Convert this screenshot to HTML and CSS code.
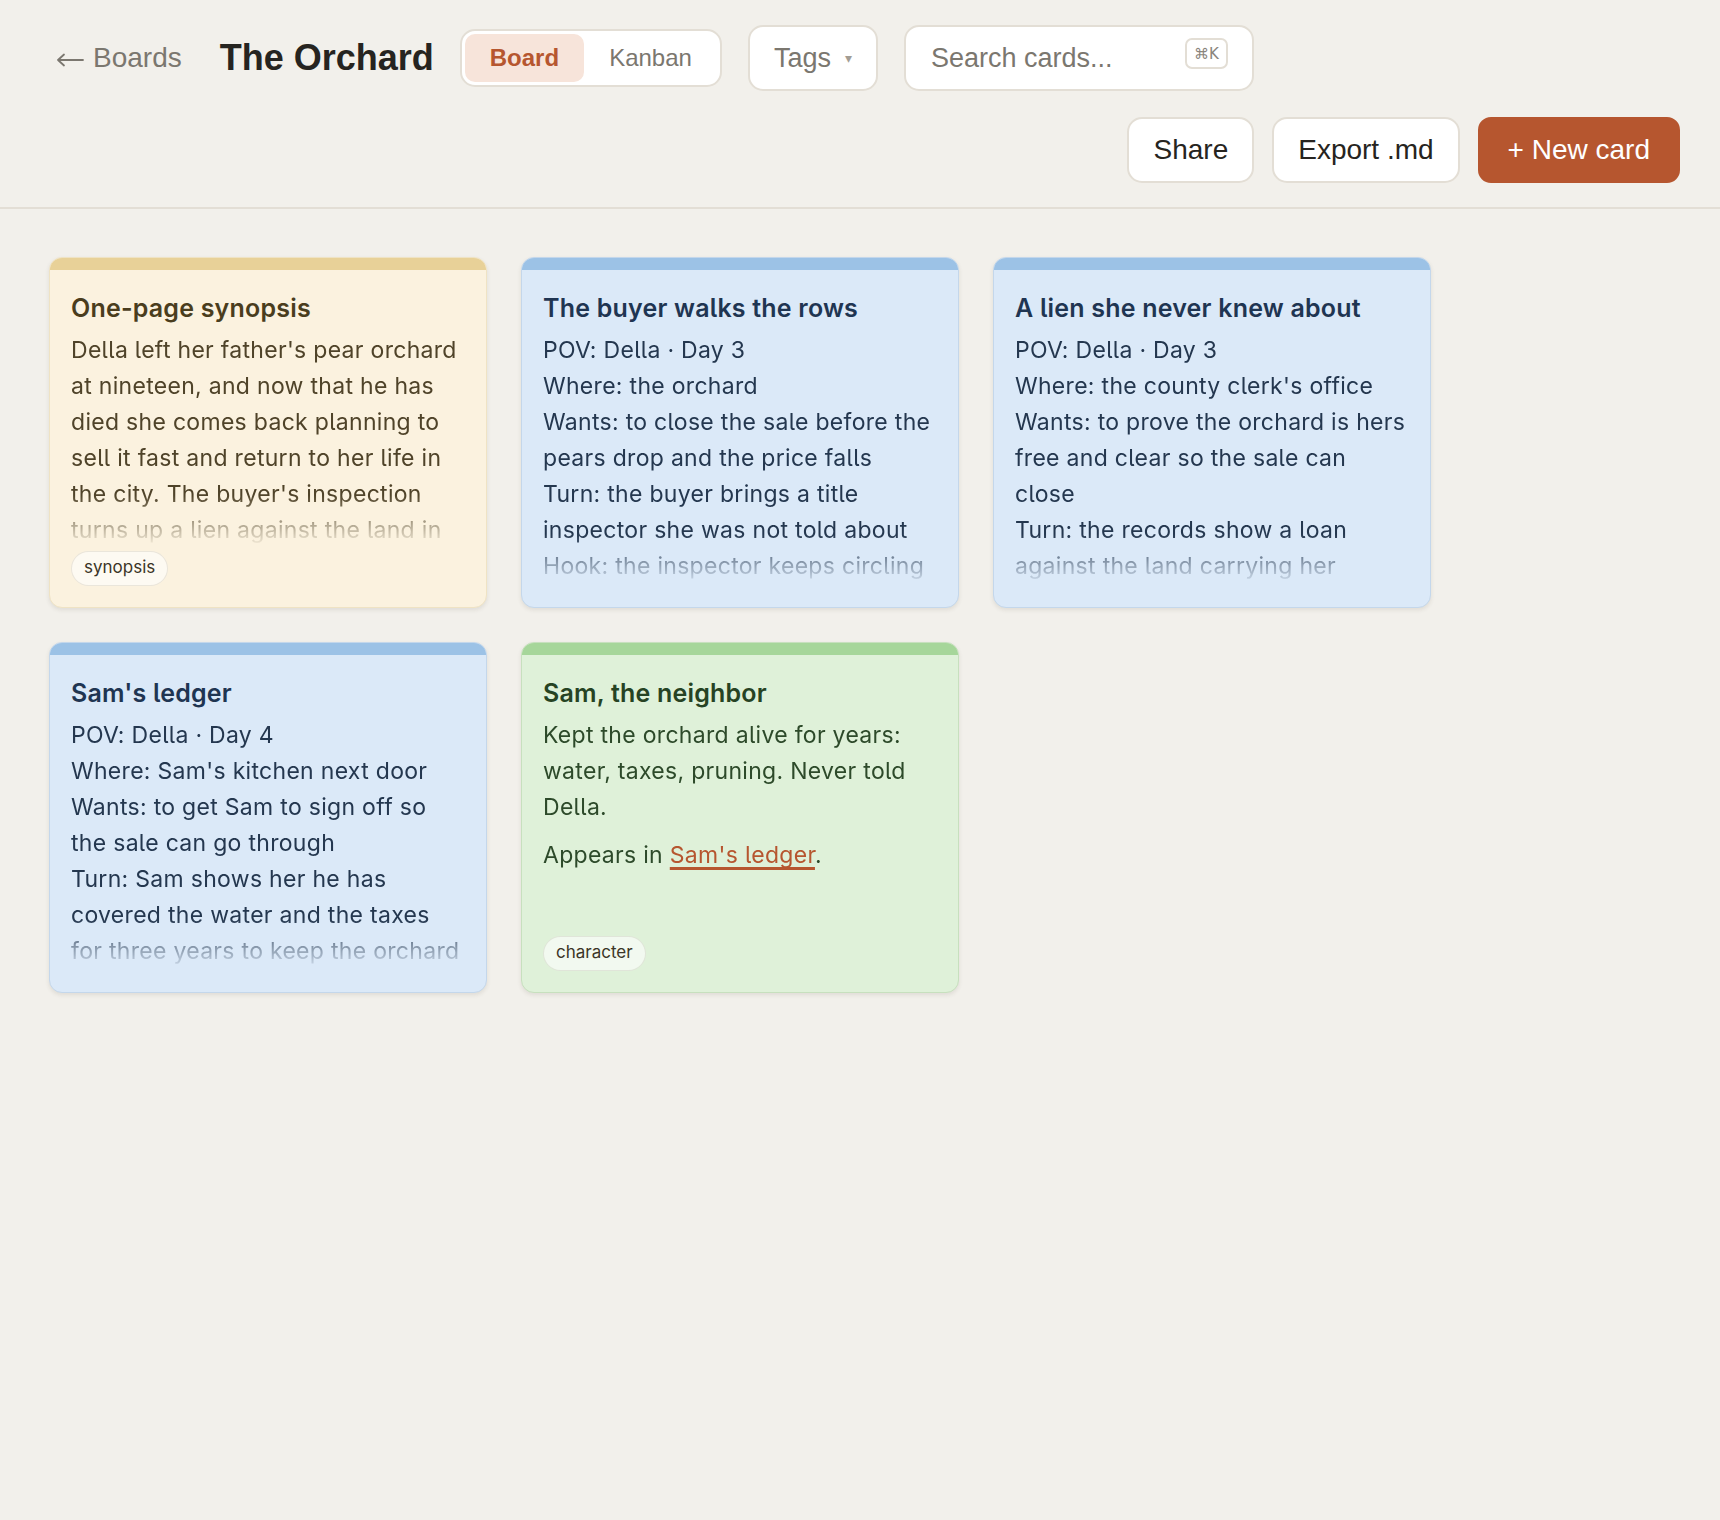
FILE: index.html
```html
<!DOCTYPE html>
<html lang="en">
<head>
  <meta charset="UTF-8">
  <meta name="viewport" content="width=device-width, initial-scale=1.0">
  <title>The Orchard</title>
  <link rel="stylesheet" href="styles.css">
</head>
<body>
  <header class="topbar">
    <a class="back-link" href="#">
      <svg class="back-arrow" width="28" height="14" viewBox="0 0 28 14" fill="none" stroke="currentColor" stroke-width="1.8" stroke-linecap="round" stroke-linejoin="round"><path d="M27 7H2M8 1.5L2 7l6 5.5"/></svg>
      Boards
    </a>
    <h1 class="board-title">The Orchard</h1>
    <div class="view-switch">
      <button class="view-btn active">Board</button>
      <button class="view-btn">Kanban</button>
    </div>
    <button class="tags-btn">Tags <span class="caret">▾</span></button>
    <label class="search">
      <input type="text" placeholder="Search cards...">
      <kbd>⌘K</kbd>
    </label>
    <div class="actions">
      <button class="btn">Share</button>
      <button class="btn">Export .md</button>
      <button class="btn btn-primary">+ New card</button>
    </div>
  </header>

  <main class="board">
    <!-- synopsis -->
    <article class="card card-yellow">
      <div class="card-bar"></div>
      <div class="card-inner">
        <h2 class="card-title">One-page synopsis</h2>
        <div class="card-body">
          <p>Della left her father's pear orchard at nineteen, and now that he has died she comes back planning to sell it fast and return to her life in the city. The buyer's inspection turns up a lien against the land in her father's name, and the only person who knows why is the neighbor.</p>
        </div>
        <div class="card-tags"><span class="tag">synopsis</span></div>
      </div>
    </article>

    <!-- scenes -->
    <article class="card card-blue">
      <div class="card-bar"></div>
      <div class="card-inner">
        <h2 class="card-title">The buyer walks the rows</h2>
        <div class="card-body">
          <p>POV: Della · Day 3</p>
          <p>Where: the orchard</p>
          <p>Wants: to close the sale before the pears drop and the price falls</p>
          <p>Turn: the buyer brings a title inspector she was not told about</p>
          <p>Hook: the inspector keeps circling back to the north boundary</p>
        </div>
      </div>
    </article>

    <article class="card card-blue">
      <div class="card-bar"></div>
      <div class="card-inner">
        <h2 class="card-title">A lien she never knew about</h2>
        <div class="card-body">
          <p>POV: Della · Day 3</p>
          <p>Where: the county clerk's office</p>
          <p>Wants: to prove the orchard is hers free and clear so the sale can close</p>
          <p>Turn: the records show a loan against the land carrying her father's signature</p>
        </div>
      </div>
    </article>

    <article class="card card-blue">
      <div class="card-bar"></div>
      <div class="card-inner">
        <h2 class="card-title">Sam's ledger</h2>
        <div class="card-body">
          <p>POV: Della · Day 4</p>
          <p>Where: Sam's kitchen next door</p>
          <p>Wants: to get Sam to sign off so the sale can go through</p>
          <p>Turn: Sam shows her he has covered the water and the taxes for three years to keep the orchard alive</p>
        </div>
      </div>
    </article>

    <!-- characters -->
    <article class="card card-green">
      <div class="card-bar"></div>
      <div class="card-inner">
        <h2 class="card-title">Sam, the neighbor</h2>
        <div class="card-body">
          <p>Kept the orchard alive for years: water, taxes, pruning. Never told Della.</p>
          <p class="para">Appears in <a href="#" class="card-link">Sam's ledger</a>.</p>
        </div>
        <div class="card-tags"><span class="tag">character</span></div>
      </div>
    </article>
  </main>
</body>
</html>
```

FILE: styles.css
```css
* { box-sizing: border-box; }
body { margin: 0; background: #f2f0eb; font-family: "Liberation Sans", Arial, sans-serif; color: #262420; min-height: 100vh; }
button { font-family: inherit; cursor: pointer; }

/* top bar */
.topbar { display: flex; flex-wrap: wrap; align-items: center; gap: 26px; padding: 25px 40px 24px 56px; border-bottom: 2px solid #e3ded5; }
.back-link { display: flex; align-items: center; gap: 9px; font-size: 28px; color: #7b776f; text-decoration: none; margin-right: 12px; }
.back-arrow { margin-top: 3px; }
.board-title { margin: 0; font-size: 36px; font-weight: 700; color: #262420; }
.view-switch { display: flex; padding: 3px; background: #fff; border: 2px solid #e3ded5; border-radius: 15px; }
.view-btn { height: 48px; padding: 0 25px; border: none; border-radius: 10px; background: transparent; font-size: 24px; color: #7b776f; }
.view-btn.active { background: #f7e4da; color: #b6562f; font-weight: 700; }
.tags-btn { height: 66px; padding: 0 24px; background: #fff; border: 2px solid #e3ded5; border-radius: 15px; font-size: 27px; color: #7b776f; display: flex; align-items: center; gap: 14px; }
.caret { font-size: 14px; color: #a29d94; }
.search { display: flex; width: 350px; height: 66px; padding: 0 24px 0 25px; background: #fff; border: 2px solid #e3ded5; border-radius: 15px; }
.search input { flex: 1; min-width: 0; border: none; outline: none; background: transparent; font-family: inherit; font-size: 27px; color: #262420; padding: 0; }
.search input::placeholder { color: #7b776f; }
.search kbd { align-self: flex-start; margin-top: 11px; width: 43px; height: 31px; display: flex; align-items: center; justify-content: center; border: 2px solid #e3ded5; border-radius: 7px; font-family: "DejaVu Sans", "Liberation Sans", sans-serif; font-size: 15px; color: #8a857c; }
.actions { display: flex; gap: 18px; margin-left: auto; }
.btn { height: 66px; padding: 0 24px; background: #fff; border: 2px solid #e3ded5; border-radius: 15px; font-size: 28px; color: #262420; }
.btn-primary { background: #b6562f; border-color: #b6562f; color: #fff; padding: 0 28px; border-radius: 13px; }

/* board */
.board { display: grid; grid-template-columns: repeat(auto-fill, 438px); gap: 34px; padding: 48px 40px 48px 49px; }
.card { height: 351px; display: flex; flex-direction: column; border: 1.5px solid; border-radius: 13px; overflow: hidden; box-shadow: 0 2px 4px rgba(60, 50, 30, 0.1); font-family: Inter, "Noto Sans", sans-serif; font-feature-settings: "cv05" 1; }
.card-bar { height: 12px; flex: none; }
.card-inner { flex: 1; min-height: 0; display: flex; flex-direction: column; padding: 22px 21px 21px; }
.card-title { margin: 0 0 8px; font-size: 25px; line-height: 32px; font-weight: 600; letter-spacing: 0.2px; }
.card-body { flex: 1 1 auto; min-height: 0; overflow: hidden; font-size: 23px; line-height: 36px; letter-spacing: 0.3px; -webkit-mask-image: linear-gradient(to bottom, #000 calc(100% - 52px), transparent 100%); mask-image: linear-gradient(to bottom, #000 calc(100% - 52px), transparent 100%); }
.card-body p { margin: 0; }
.card-body .para { margin-top: 12px; }
.card-link { color: #b6562f; text-decoration: underline; text-decoration-thickness: 3px; text-underline-offset: 4px; text-decoration-skip-ink: none; }
.card-tags { flex: none; display: flex; gap: 8px; margin-top: 4px; }
.tag { display: inline-block; height: 35px; line-height: 31px; padding: 0 12px; border: 1.5px solid rgba(90, 80, 50, 0.12); border-radius: 18px; background: rgba(255, 255, 255, 0.6); font-size: 17px; color: #3b3527; }

.card-yellow { background: #fbf2df; border-color: #efe3c4; }
.card-yellow .card-bar { background: #e8d198; }
.card-yellow .card-title { color: #4a3d1d; }
.card-yellow .card-body { color: #4f4329; }

.card-blue { background: #dbe9f8; border-color: #c4d7eb; }
.card-blue .card-bar { background: #9cc2e6; }
.card-blue .card-title { color: #1f3552; }
.card-blue .card-body { color: #24374f; }

.card-green { background: #dff1d9; border-color: #c7e0be; }
.card-green .card-bar { background: #a6d69a; }
.card-green .card-title { color: #264323; }
.card-green .card-body { color: #2d4a2a; }
```
